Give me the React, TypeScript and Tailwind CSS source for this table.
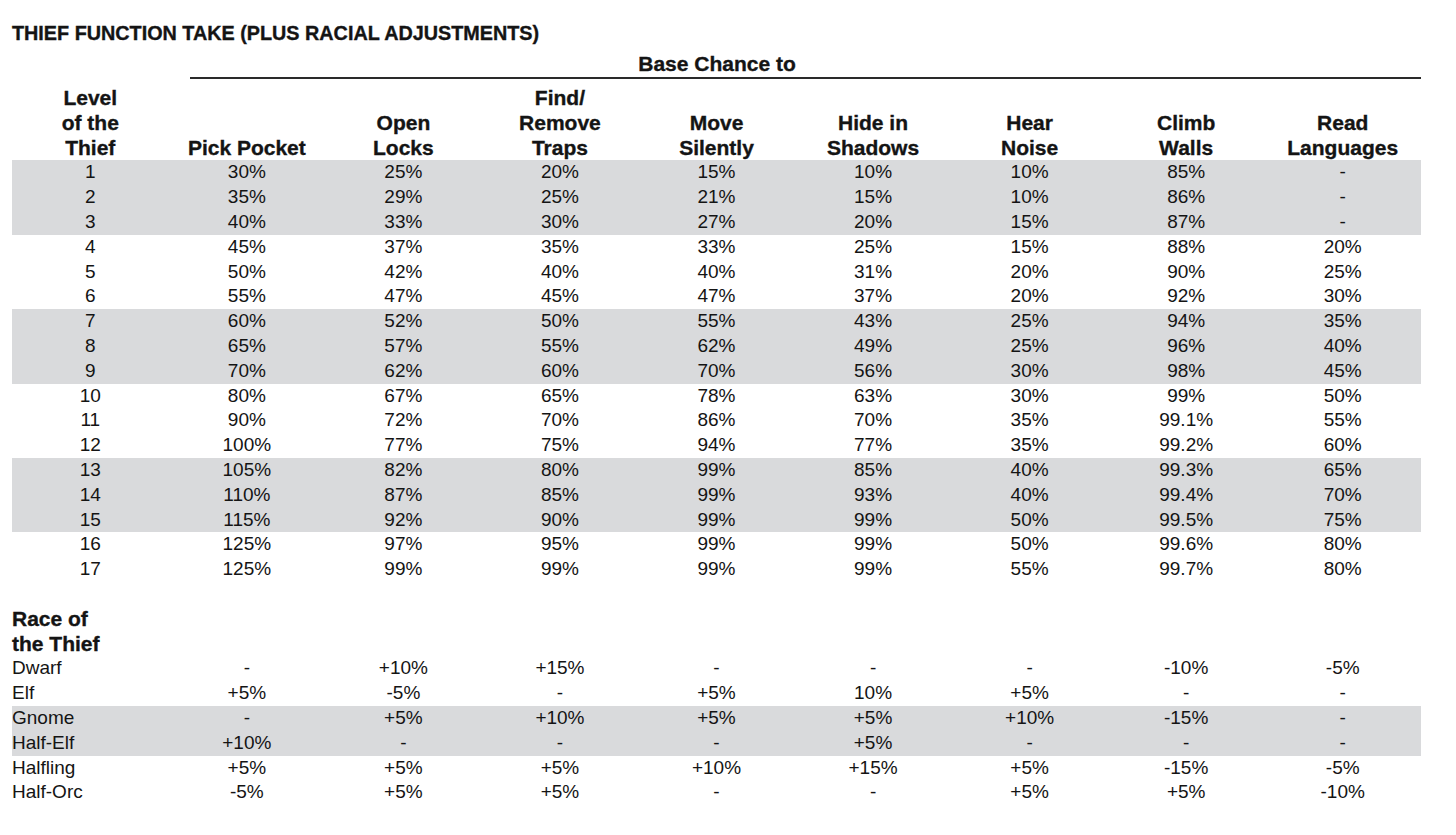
const columns = [
  ["Pick Pocket"],
  ["Open", "Locks"],
  ["Find/", "Remove", "Traps"],
  ["Move", "Silently"],
  ["Hide in", "Shadows"],
  ["Hear", "Noise"],
  ["Climb", "Walls"],
  ["Read", "Languages"],
];

const levels: string[][] = [
  ["30%", "25%", "20%", "15%", "10%", "10%", "85%", "-"],
  ["35%", "29%", "25%", "21%", "15%", "10%", "86%", "-"],
  ["40%", "33%", "30%", "27%", "20%", "15%", "87%", "-"],
  ["45%", "37%", "35%", "33%", "25%", "15%", "88%", "20%"],
  ["50%", "42%", "40%", "40%", "31%", "20%", "90%", "25%"],
  ["55%", "47%", "45%", "47%", "37%", "20%", "92%", "30%"],
  ["60%", "52%", "50%", "55%", "43%", "25%", "94%", "35%"],
  ["65%", "57%", "55%", "62%", "49%", "25%", "96%", "40%"],
  ["70%", "62%", "60%", "70%", "56%", "30%", "98%", "45%"],
  ["80%", "67%", "65%", "78%", "63%", "30%", "99%", "50%"],
  ["90%", "72%", "70%", "86%", "70%", "35%", "99.1%", "55%"],
  ["100%", "77%", "75%", "94%", "77%", "35%", "99.2%", "60%"],
  ["105%", "82%", "80%", "99%", "85%", "40%", "99.3%", "65%"],
  ["110%", "87%", "85%", "99%", "93%", "40%", "99.4%", "70%"],
  ["115%", "92%", "90%", "99%", "99%", "50%", "99.5%", "75%"],
  ["125%", "97%", "95%", "99%", "99%", "50%", "99.6%", "80%"],
  ["125%", "99%", "99%", "99%", "99%", "55%", "99.7%", "80%"],
];

const races: { name: string; values: string[] }[] = [
  { name: "Dwarf", values: ["-", "+10%", "+15%", "-", "-", "-", "-10%", "-5%"] },
  { name: "Elf", values: ["+5%", "-5%", "-", "+5%", "10%", "+5%", "-", "-"] },
  { name: "Gnome", values: ["-", "+5%", "+10%", "+5%", "+5%", "+10%", "-15%", "-"] },
  { name: "Half-Elf", values: ["+10%", "-", "-", "-", "+5%", "-", "-", "-"] },
  { name: "Halfling", values: ["+5%", "+5%", "+5%", "+10%", "+15%", "+5%", "-15%", "-5%"] },
  { name: "Half-Orc", values: ["-5%", "+5%", "+5%", "-", "-", "+5%", "+5%", "-10%"] },
];

const grid = "grid grid-cols-9";
// heavy headings, a touch thicker than plain bold
const heavy = "font-bold [-webkit-text-stroke:0.35px_#141414]";

function shaded(index: number, bands: number[]) {
  return bands.includes(index) ? "bg-[#d9dadc]" : "";
}

export default function App() {
  return (
    <div className="min-h-[835px] w-[1456px] bg-white font-['Liberation_Sans',Arial,sans-serif] text-[#141414]">
      <div className="w-[1421px] pl-[12px]">
        <h1 className={`pt-[22px] text-[19.8px] leading-[22px] ${heavy}`}>
          THIEF FUNCTION TAKE (PLUS RACIAL ADJUSTMENTS)
        </h1>

        <div className={`${grid} mt-[9px] h-[22px] items-end text-[21px] leading-[22px] ${heavy}`}>
          <div className="col-start-5 whitespace-nowrap text-center">Base Chance to</div>
        </div>
        <div className="ml-[178px] mt-[2px] border-t-2 border-[#2a2a2a]" />

        <div className={`${grid} mt-[7px] items-end text-[21px] leading-[24.8px] ${heavy}`}>
          <div className="text-center">
            <div>Level</div>
            <div>of the</div>
            <div>Thief</div>
          </div>
          {columns.map((lines, i) => (
            <div key={i} className="text-center">
              {lines.map((line) => (
                <div key={line}>{line}</div>
              ))}
            </div>
          ))}
        </div>

        <div className="text-[19px] leading-[24.8px]">
          {levels.map((row, i) => (
            <div key={i} className={`${grid} ${shaded(i, [0, 1, 2, 6, 7, 8, 12, 13, 14])}`}>
              <div className="text-center">{i + 1}</div>
              {row.map((value, j) => (
                <div key={j} className="text-center">
                  {value}
                </div>
              ))}
            </div>
          ))}
        </div>

        <div className={`mt-[24.8px] text-[21px] leading-[24.8px] ${heavy}`}>
          <div>Race of</div>
          <div>the Thief</div>
        </div>

        <div className="text-[19px] leading-[24.8px]">
          {races.map((race, i) => (
            <div key={race.name} className={`${grid} ${shaded(i, [2, 3])}`}>
              <div>{race.name}</div>
              {race.values.map((value, j) => (
                <div key={j} className="text-center">
                  {value}
                </div>
              ))}
            </div>
          ))}
        </div>
      </div>
    </div>
  );
}
